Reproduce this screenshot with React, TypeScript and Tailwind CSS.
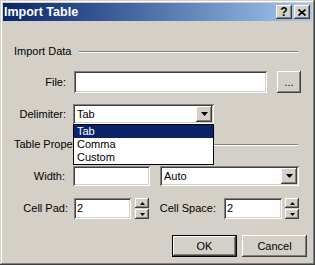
import { ReactNode } from "react";

const raised =
  "bg-[#d4d0c8] shadow-[inset_-1px_-1px_#404040,inset_1px_1px_#ffffff,inset_-2px_-2px_#808080,inset_2px_2px_#d4d0c8]";
const sunken =
  "bg-white shadow-[inset_1px_1px_#808080,inset_-1px_-1px_#ffffff,inset_2px_2px_#404040,inset_-2px_-2px_#d4d0c8]";

const DownArrow = () => (
  <svg width="7" height="4" viewBox="0 0 7 4">
    <path d="M0 0h7L3.5 4z" fill="#000" />
  </svg>
);

const SmallArrow = ({ up }: { up?: boolean }) => (
  <svg width="5" height="3" viewBox="0 0 5 3">
    <path d={up ? "M2.5 0L5 3H0z" : "M0 0h5L2.5 3z"} fill="#000" />
  </svg>
);

const Section = ({ title }: { title: string }) => (
  <div className="flex h-[13px] items-center pl-[14px] pr-[17px]">
    <span className="whitespace-nowrap leading-[13px]">{title}</span>
    <div className="ml-[8px] flex-1 border-t border-b border-t-[#808080] border-b-white" />
  </div>
);

const Combo = ({ value, width }: { value: string; width: string }) => (
  <div className={`${sunken} ${width} flex h-[20px] items-center pl-[4px] pr-[2px]`}>
    <span className="flex-1 text-[11px]">{value}</span>
    <div className={`${raised} flex h-[16px] w-[16px] items-center justify-center`}>
      <DownArrow />
    </div>
  </div>
);

const Spinner = () => (
  <div className="flex h-[21px] w-[14px] flex-col">
    <div className={`${raised} flex h-[10px] items-center justify-center`}>
      <SmallArrow up />
    </div>
    <div className={`${raised} mt-[1px] flex h-[10px] items-center justify-center`}>
      <SmallArrow />
    </div>
  </div>
);

const Label = ({ children, width }: { children: ReactNode; width: string }) => (
  <span className={`${width} shrink-0 whitespace-nowrap text-right`}>{children}</span>
);

export default function App() {
  return (
    <div className="relative h-[265px] w-[315px] bg-[#d4d0c8] p-[3px] font-['Liberation_Sans',Arial,sans-serif] text-[11px] text-black shadow-[inset_-1px_-1px_#404040,inset_1px_1px_#d4d0c8,inset_-2px_-2px_#808080,inset_2px_2px_#ffffff]">
      {/* title bar */}
      <div className="flex h-[18px] items-center bg-linear-to-r from-[#0a246a] to-[#a6caf0] pl-[1px] pr-[2px]">
        <span className="flex-1 text-[12.5px] font-bold text-white">Import Table</span>
        <div className={`${raised} flex h-[14px] w-[16px] items-center justify-center text-[12px] font-bold leading-none`}>
          ?
        </div>
        <div className={`${raised} ml-[2px] flex h-[14px] w-[16px] items-center justify-center`}>
          <svg width="8" height="7" viewBox="0 0 8 7">
            <path d="M0.5 0.5L7.5 6.5M7.5 0.5L0.5 6.5" stroke="#000" strokeWidth="1.6" />
          </svg>
        </div>
      </div>

      <div className="-mx-[3px] flex flex-col">
        <div className="mt-[24px]">
          <Section title="Import Data" />
        </div>

        <div className="mt-[13px] flex h-[22px] items-center">
          <Label width="w-[66px]">File:</Label>
          <div className={`${sunken} ml-[8px] h-[22px] w-[193px]`} />
          <div className={`${raised} ml-[10px] flex h-[22px] w-[24px] items-end justify-center pb-[5px] leading-none`}>
            ...
          </div>
        </div>

        <div className="mt-[11px] flex h-[20px] items-center">
          <Label width="w-[66px]">Delimiter:</Label>
          <div className="ml-[7px]">
            <Combo value="Tab" width="w-[141px]" />
          </div>
        </div>

        <div className="mt-[14px]">
          <Section title="Table Properties" />
        </div>

        <div className="mt-[15px] flex h-[20px] items-center">
          <Label width="w-[65px]">Width:</Label>
          <div className={`${sunken} ml-[8px] h-[20px] w-[77px]`} />
          <div className="ml-[10px]">
            <Combo value="Auto" width="w-[139px]" />
          </div>
        </div>

        <div className="mt-[12px] flex h-[21px] items-center">
          <Label width="w-[68px]">Cell Pad:</Label>
          <div className={`${sunken} ml-[6px] flex h-[21px] w-[57px] items-center pl-[3px]`}>2</div>
          <div className="ml-[4px]">
            <Spinner />
          </div>
          <Label width="ml-[8px] w-[59px]">Cell Space:</Label>
          <div className={`${sunken} ml-[8px] flex h-[21px] w-[58px] items-center pl-[3px]`}>2</div>
          <div className="ml-[3px]">
            <Spinner />
          </div>
        </div>

        <div className="mt-[16px] flex h-[22px] justify-end pr-[8px]">
          <div className="h-[22px] w-[65px] border border-black">
            <div className={`${raised} flex h-full items-center justify-center`}>OK</div>
          </div>
          <div className={`${raised} ml-[5px] flex h-[22px] w-[65px] items-center justify-center`}>
            Cancel
          </div>
        </div>
      </div>

      {/* open delimiter list */}
      <div className="absolute left-[73px] top-[124px] w-[141px] border border-black bg-white text-[11px]">
        <div className="h-[13px] bg-[#0a246a] pl-[3px] leading-[13px] text-white">Tab</div>
        <div className="h-[13px] pl-[3px] leading-[13px]">Comma</div>
        <div className="h-[13px] pl-[3px] leading-[13px]">Custom</div>
      </div>
    </div>
  );
}
